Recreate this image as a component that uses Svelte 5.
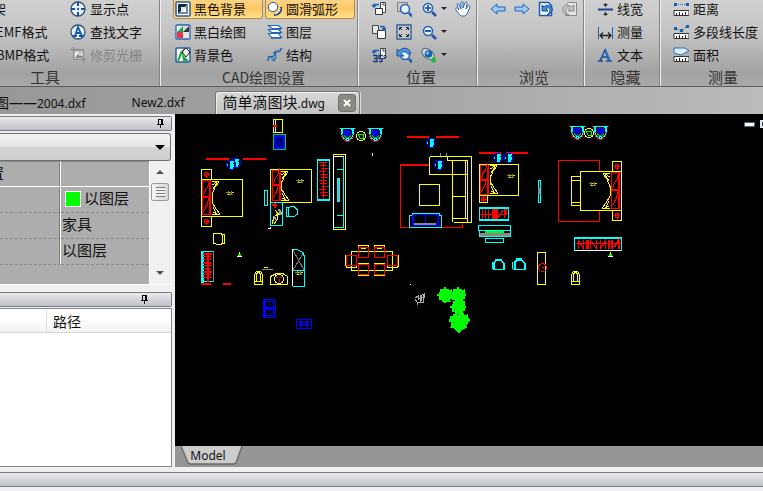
<script lang="ts">
  type Tool = { icon: string; label?: string; active?: boolean; disabled?: boolean; menu?: boolean; title?: string };
  type Group = { name: string; cls: string; tools: Tool[] };

  let blackBg = $state(true);
  let smoothArc = $state(true);
  let activeTab = $state(2);

  const groups: Group[] = $derived([
    {
      name: '工具', cls: 'tools', tools: [
        { icon: '', label: '架' }, { icon: 'target', label: '显示点' },
        { icon: '', label: 'EMF格式' }, { icon: 'find', label: '查找文字' },
        { icon: '', label: 'BMP格式' }, { icon: 'crop', label: '修剪光栅', disabled: true },
      ],
    },
    {
      name: 'CAD绘图设置', cls: 'settings', tools: [
        { icon: 'black', label: '黑色背景', active: blackBg }, { icon: 'arc', label: '圆滑弧形', active: smoothArc },
        { icon: 'mono', label: '黑白绘图' }, { icon: 'layers', label: '图层' },
        { icon: 'bg', label: '背景色' }, { icon: 'struct', label: '结构' },
      ],
    },
    {
      name: '位置', cls: 'position', tools: [
        { icon: 'rotl', title: '左转' }, { icon: 'zoomwin', title: '窗口缩放' }, { icon: 'zoomin', menu: true, title: '放大' }, { icon: 'hand', title: '平移' },
        { icon: 'rotr', title: '右转' }, { icon: 'fit', title: '适应窗口' }, { icon: 'zoomout', menu: true, title: '缩小' }, { icon: '', title: '' },
        { icon: 'rot35', title: '旋转角度' }, { icon: 'zoomprev', title: '上一视图' }, { icon: 'orbit', menu: true, title: '轨道' }, { icon: '', title: '' },
      ],
    },
    {
      name: '浏览', cls: 'browse', tools: [
        { icon: 'prev', title: '后退' }, { icon: 'next', title: '前进' }, { icon: 'undo', title: '撤销' }, { icon: 'redo', title: '重做', disabled: true },
      ],
    },
    {
      name: '隐藏', cls: 'hide', tools: [
        { icon: 'lw', label: '线宽' }, { icon: 'dim', label: '测量' }, { icon: 'text', label: '文本' },
      ],
    },
    {
      name: '测量', cls: 'measure', tools: [
        { icon: 'dist', label: '距离' }, { icon: 'poly', label: '多段线长度' }, { icon: 'area', label: '面积' },
      ],
    },
  ]);

  const rungs = (n: number) => Array.from({ length: n }, (_, i) => i);

  // ragged outline of a tree crown
  function crown(cx: number, cy: number, r: number) {
    const n = r * 4;
    return rungs(n).map((i) => {
      const a = (i / n) * Math.PI * 2;
      const d = r + [1, -1, 0, -2, 1, 0, -1][i % 7];
      return `${Math.round(cx + Math.cos(a) * d)},${Math.round(cy + Math.sin(a) * d)}`;
    }).join(' ');
  }

  function press(tool: Tool) {
    if (tool.icon === 'black') blackBg = !blackBg;
    if (tool.icon === 'arc') smoothArc = !smoothArc;
  }
</script>

{#snippet ruler()}
  <path d="M1 9.5h15v5H1z" fill="#fff" stroke="#333" />
  <path d="M3.5 12v2M6.5 11v3M9.5 12v2M12.5 11v3" stroke="#222" />
{/snippet}

{#snippet lens(x: number, y: number)}
  <circle cx={x} cy={y} r="4.5" fill="#e4f1ff" stroke="#2860b8" stroke-width="1.5" />
  <path d="M{x + 4} {y + 4}l4 4" stroke="#2458a8" stroke-width="2.6" />
{/snippet}

{#snippet icon(name: string)}
  <svg class="icon" width="16" height="16" viewBox="0 0 16 16" fill="none" aria-hidden="true">
    {#if name === 'target'}
      <circle cx="8" cy="8" r="7" fill="#eaf5ff" stroke="#35506f" stroke-width="1.3" />
      <path d="M8 1v4M8 11v4M1 8h4M11 8h4" stroke="#174f9b" stroke-width="2" />
      <circle cx="8" cy="8" r="1.2" fill="#1467c8" />
    {:else if name === 'find'}
      <circle cx="8" cy="8" r="7" fill="#eaf5ff" stroke="#35506f" stroke-width="1.3" />
      <path d="M3 12h4M9 12h5M5 12l3-9 4 9M6 9h4" stroke="#0d58b5" stroke-width="1.8" />
    {:else if name === 'crop'}
      <path d="M3.5 0v12.5H16M0 2.5h13.5V16" stroke="#858585" />
      <path d="M4 4h9v8H4z" fill="#e8e8e8" stroke="#999" />
      <path d="M5 11l3-4 2 2 1-1 2 3z" fill="#888" /><circle cx="10" cy="6" r="1" fill="#999" />
    {:else if name === 'black'}
      <rect x="1" y="1" width="14" height="14" rx="1" fill="#fff" stroke="#1d5fac" stroke-width="1.5" />
      <path d="M3 3h10L3 13z" fill="#142942" /><path d="M13 3v10H3z" fill="#7189a4" />
      <path d="M6 6h5l-5 5z" fill="#dfe8f2" /><path d="M11 6v5H6z" fill="#fff" />
    {:else if name === 'mono'}
      <rect x="1" y="1" width="14" height="14" rx="1" fill="#fff" stroke="#2866a8" stroke-width="1.3" />
      <path d="M8 2h6L8 8z" fill="#ddd" /><path d="M14 2v6H8z" fill="#333" /><path d="M2 2h6v6H2z" fill="#e9f7ec" /><path d="M2 8l6-6v6z" fill="#1ba64a" />
      <path d="M2 8h6v6H2z" fill="#e6374b" /><path d="M8 8h6v6H8z" fill="#e4e4e4" />
    {:else if name === 'arc'}
      <circle cx="6" cy="6" r="4.700" fill="#fff" stroke="#275b9d" />
      <path d="M14 6c1 4-2 8-7 8" stroke="#19447f" stroke-width="2" />
      <path d="M13 7c0 4-2 5-5 6" stroke="#fff" />
    {:else if name === 'layers'}
      <path d="M1.500 1.500h10l3 3H5zM1.500 5.500l3 3h10l-3-3zM1.500 9.500l3 4h10l-3-4z" fill="#fff" stroke="#2468ae" stroke-width="1.200" />
      <path d="M5 5h9M5 9h9M4 14h10" stroke="#2468ae" stroke-width="1.500" />
    {:else if name === 'bg'}
      <rect x="1" y="1" width="14" height="14" rx="1" fill="#fff" stroke="#2662a5" stroke-width="1.500" />
      <path d="M2 14L6 3l3 6 5 5z" fill="#21a83a" /><path d="M7 5l4-4 4 4-4 5z" fill="#f2f2f2" stroke="#222" />
      <path d="M10 2c-2 0-3 2-2 4" stroke="#333" /><path d="M4 14l3-7 1 7" fill="#fff" />
    {:else if name === 'struct'}
      <path d="M1 14c0-8 6-1 6-7s7 1 7-6M1 10c5-3 4 8 7 2s-3-6 2-7 3-4 5-3" stroke="#2364ad" stroke-width="1.500" />
      <path d="M3 10l3 4M6 7l4 4M9 4l3 3M11 2l3 3" stroke="#68a1dd" />
    {:else if name === 'rotl' || name === 'rotr' || name === 'rot35'}
      {#if name === 'rotr'}
        <path d="M1.500 1.500h6v8h-6z" fill="#e9e9e9" stroke="#444" /><path d="M6.500 6.500h8v8h-8z" fill="#fff" stroke="#333" />
        <path d="M9 2.500h4v3M11 4l2 2 2-2" stroke="#1563ba" stroke-width="1.400" />
      {:else}
        <path d="M9.500 1.500h5v10h-5z" fill="#fff" stroke="#444" /><path d="M12 1v3h3" stroke="#444" />
        <path d="M8 3.500H3v3M1 4l2 2 2-2" stroke="#1563ba" stroke-width="1.400" />
        {#if name === 'rotl'}
          <path d="M4.500 7.500h7v6h-7z" fill="#fff" stroke="#333" />
        {:else}
          <path d="M2 8.500h4v6H2M3 11.500h3M12 8.500H8v3h3v3H8" stroke="#193c78" stroke-width="1.300" /><circle cx="14" cy="9.500" r="1.200" stroke="#193c78" />
        {/if}
      {/if}
    {:else if name === 'zoomwin'}
      <path d="M1.500 1.500h10v9h-10z" stroke="#333" stroke-dasharray="1 1" />{@render lens(9, 8)}
    {:else if name === 'zoomin'}
      {@render lens(7, 7)}<path d="M4 7h6M7 4v6" stroke="#164fa4" stroke-width="1.700" />
    {:else if name === 'zoomout'}
      {@render lens(7, 7)}<path d="M4 7h6" stroke="#164fa4" stroke-width="1.800" />
    {:else if name === 'fit'}
      <path d="M1 1h14v14H1z" fill="#c8c8c8" stroke="#2c62a0" stroke-width="1.400" />
      <path d="M3.500 6V3.500H6M10 3.500h2.500V6M3.500 10v2.500H6M10 12.500h2.500V10M4 4l2 2M12 4l-2 2M4 12l2-2M12 12l-2-2" stroke="#222" />
    {:else if name === 'zoomprev'}
      {@render lens(9, 8)}<path d="M1 2v7h7L5 7c1-3 5-3 7 0l3-1c-2-6-9-6-12-2z" fill="#4a94dc" stroke="#1d559f" />
    {:else if name === 'orbit'}
      <ellipse cx="7" cy="7" rx="7" ry="4.500" transform="rotate(40 7 7)" fill="#ccd7e4" stroke="#566" />
      <circle cx="7.500" cy="7" r="3.800" fill="#1764ad" /><circle cx="6.500" cy="6" r="1.500" fill="#83c2f4" /><circle cx="12.500" cy="13" r="2.500" fill="#20b936" />
    {:else if name === 'hand'}
      <path d="M5 14L1 9c-1-2 1-3 2-1l1 1-2-5c0-2 2-2 2 0l2 4V2c0-2 2-2 2 0v5l2-5c1-2 2-1 2 1l-1 5 2-3c1-1 2 0 2 1l-3 7-2 2H6z" fill="#fff" stroke="#2e66b0" />
    {:else if name === 'prev'}
      <path d="M1 8l6-5v3h8v4H7v3z" fill="#9bccf5" stroke="#2661b0" />
    {:else if name === 'next'}
      <path d="M15 8L9 3v3H1v4h8v3z" fill="#9bccf5" stroke="#2661b0" />
    {:else if name === 'undo'}
      <path d="M1.500 1.500h9l3 3v10h-12z" fill="#fff" stroke="#1a5db3" stroke-width="1.500" />
      <path d="M4 4v6h6L8 8c2-2 4-1 4 1 0 3-2 4-3 5 4-1 6-4 5-7s-6-4-8-1z" fill="#378dde" stroke="#164d9a" />
    {:else if name === 'redo'}
      <path d="M14.500 1.500h-8l-3 3v10h11z" fill="#e7e7e7" stroke="#888" />
      <path d="M12 4v6H6l2-2C6 6 4 7 4 9c0 3 1 4 3 5-5 0-7-4-6-7s6-4 8-1z" fill="#c3c3c3" stroke="#888" />
    {:else if name === 'lw'}
      <path d="M1 8.500h15" stroke="#164994" stroke-width="2" /><path d="M6 3h5L8.500 6zM6 14h5l-2.500-3z" fill="#333" /><path d="M8.500 2v4M8.500 11v4" stroke="#333" />
    {:else if name === 'dim'}
      <path d="M1.500 3v12M15.500 3v12" stroke="#1f64b7" /><path d="M3 11.500h11M6 8.500l-3 3 3 3M11 8.500l3 3-3 3" stroke="#222" stroke-width="1.300" />
    {:else if name === 'text'}
      <path d="M1 14h5M9 14h6M3 14L8 3l4 11M5 10h5" stroke="#174f9c" stroke-width="1.500" /><path d="M8 3l4 11h2L9 2z" fill="#2c70bd" />
    {:else if name === 'dist'}
      <path d="M3 3.500h12" stroke="#1c5fb0" stroke-dasharray="1 1" /><path d="M1 2h3v3H1zM13 2h3v3h-3z" fill="#145eb6" />{@render ruler()}
    {:else if name === 'poly'}
      <path d="M2 4l6 3 6-5" stroke="#1c5fb0" stroke-dasharray="1 1" /><path d="M1 3h3v3H1zM7 5h3v3H7zM13 1h3v3h-3z" fill="#145eb6" />{@render ruler()}
    {:else if name === 'area'}
      <path d="M1 1h11l4 3-8 4-7-2z" fill="#d9efff" stroke="#2e6eae" />{@render ruler()}
    {/if}
  </svg>
{/snippet}

{#snippet pin()}
  <svg width="9" height="9" viewBox="0 0 9 9" fill="none" stroke="#000" shape-rendering="crispEdges" aria-hidden="true">
    <path d="M2.500 5V.500h4V5M5.500 1v4M1 5.500h7M4.500 6v3" />
  </svg>
{/snippet}

{#snippet armchair(x: number, y: number)}
  <g transform="translate({x} {y})">
    <path d="M1 .5h15M2.500 1v5l2 4 3 2h2l3-2 2-4V1" stroke="#0ff" />
    <path d="M2 1.500h2M12 1.500h3M3.500 2v4M13.500 2v4M7 10.500h3" stroke="#0ff" />
    <path d="M5 2h7v5l-2 2H7L5 7z" fill="#00f" />
    <path d="M6 3h1M9 4h1M7 6h1M11 3h1M10 7h1" stroke="#000" /><path d="M5 7.500l2 2h3l2-2" stroke="#0a0" />
    <path d="M2.500 8.500l2 3 3 2h2l3-2 2-3M.5 0v1M16.500 0v1" stroke="#f00" />
  </g>
{/snippet}

{#snippet roundTable(x: number, y: number)}
  <circle cx={x} cy={y} r="4.500" stroke="#ff0" />
  <path d="M{x - 3} {y - 2}l3 1 2-1 1 2-1 3-3-1z" stroke="#0f0" />
{/snippet}

{#snippet plant(x: number, y: number)}
  <g transform="translate({x} {y})">
    <path d="M-1-5l5 2 1 4-4 4-4-2-2-2v-3z" stroke="#00f" />
    <path d="M0-4l3 1-2 2 2 1-1 2-1 2-2-1 1-2-1-2zM-4 1l1-2" fill="#0ff" stroke="#0ff" />
  </g>
{/snippet}

{#snippet pillows(x: number, y: number, h: number)}
  <g stroke="#f00">
    <rect {x} {y} width="8" height={h / 2 - 1} /><rect {x} y={y + h / 2} width="8" height={h / 2} />
    <path d="M{x + 1} {y + h / 2 - 2}l2-6 2-2 2-7M{x + 1} {y + h - 2}l2-5 2-4 1-5M{x + 7} {y + 2}v{h - 3}" />
  </g>
{/snippet}

{#snippet quilt(h: number)}
  <path d="M0 0l7 1-4 5-3 8M0 4l5-3M1 8l4-6M0 {h / 2 - 5}v10M0 {h}l8-1-4-5-4-7M1 {h - 3}l4 2M1 {h - 8}l3 6" stroke="#ff0" />
{/snippet}

{#snippet caption(x: number, y: number)}
  <path d="M{x} {y}h8M{x + 1} {y + 2}h6M{x + 2} {y - 1}v4M{x + 5} {y - 1}v4" stroke="#880" />
  <path d="M{x + 3} {y}h1M{x + 6} {y}h2M{x + 2} {y + 2}h2" stroke="#dd3" />
{/snippet}

{#snippet nightstand(x: number, y: number, w: number, h: number)}
  <rect {x} {y} width={w} height={h} stroke="#ff0" />
  <circle cx={x + w / 2} cy={y + h / 2} r="2" stroke="#f00" />
  <path d="M{x + w / 2 - 3} {y + h / 2}h6M{x + w / 2} {y + h / 2 - 3}v6" stroke="#f00" />
{/snippet}

{#snippet sprout(x: number, y: number)}
  <path d="M{x} {y - 3}v2" stroke="#ff0" /><path d="M{x - 1} {y}h3" stroke="#0f0" stroke-width="2" /><path d="M{x - 2} {y + 1.5}h5" stroke="#fff" />
{/snippet}

{#snippet diningChair(x: number, y: number, back: number)}
  <path d="M{x} {y + back}h10v12h-10z" stroke="#ff0" /><path d="M{x} {y}h10v10h-10z" stroke="#f00" />
{/snippet}

{#snippet toilet(x: number, y: number)}
  <path d="M{x} {y + 14}v-9l2-4h4l2 4v9zM{x + 2} {y + 11}v-6l1-3h2l1 3v6M{x} {y + 11.5}h8" stroke="#ff0" />
{/snippet}

<div class="app">
  <header class="ribbon">
    {#each groups as group}
      <section class="group {group.cls}" aria-label={group.name}>
        <div class="items">
          {#each group.tools as tool}
            {#if tool.icon || tool.label}
              <button
                type="button"
                class="tool"
                class:active={tool.active}
                disabled={tool.disabled}
                aria-label={tool.label ?? tool.title}
                onclick={() => press(tool)}
              >
                {#if tool.icon}{@render icon(tool.icon)}{/if}
                {#if tool.label}<span>{tool.label}</span>{/if}
                {#if tool.menu}<i class="caret"></i>{/if}
              </button>
            {:else}
              <span></span>
            {/if}
          {/each}
        </div>
        <h2>{group.name}</h2>
      </section>
    {/each}
  </header>

  <nav class="tabs">
    <button type="button" class="tab first" class:current={activeTab === 0} onclick={() => activeTab = 0}><b>图——</b>2004.dxf</button>
    <button type="button" class="tab" class:current={activeTab === 1} onclick={() => activeTab = 1}>New2.dxf</button>
    <div class="tab-wrap" class:current={activeTab === 2}>
      <button type="button" class="tab" onclick={() => activeTab = 2}><b>简单滴图块</b>.dwg</button>
      <button type="button" class="close" aria-label="关闭">
        <svg width="8" height="8" viewBox="0 0 8 8" stroke="#fff" stroke-width="2" aria-hidden="true"><path d="M1 1l6 6M7 1L1 7" /></svg>
      </button>
    </div>
  </nav>

  <main>
    <aside>
      <div class="panel-title"><button type="button" aria-label="固定属性面板">{@render pin()}</button></div>
      <div class="combo">
        <select aria-label="对象类型"><option></option></select>
        <i class="caret big"></i>
      </div>
      <div class="props">
        <table>
          <thead><tr><th>置</th><th></th></tr></thead>
          <tbody>
            <tr><td></td><td><i class="swatch"></i>以图层</td></tr>
            <tr><td></td><td>家具</td></tr>
            <tr><td></td><td>以图层</td></tr>
          </tbody>
        </table>
        <div class="scroll">
          <button type="button" aria-label="向上滚动"><i class="arrow up"></i></button>
          <div class="thumb"></div>
          <button type="button" aria-label="向下滚动"><i class="arrow"></i></button>
        </div>
      </div>
      <div class="panel-title second"><button type="button" aria-label="固定文件面板">{@render pin()}</button></div>
      <div class="files">
        <table><thead><tr><th></th><th>路径</th></tr></thead></table>
      </div>
    </aside>

    <section class="view">
      <div class="canvas">
        <svg class="drawing" width="588" height="332" viewBox="175 114 588 332" fill="none" shape-rendering="crispEdges" role="img" aria-label="简单滴图块.dwg">
          <!-- washer and sink -->
          <path d="M273.500 119.500h9v13h-9zM275.500 120v12" stroke="#ff0" /><path d="M273 125.500h4" stroke="#f00" stroke-width="2" />
          <rect x="273.500" y="134.500" width="12" height="15" stroke="#0c4" /><path d="M275 136h9v12h-9z" fill="#00a" stroke="#00f" stroke-width="2" /><path d="M277.500 139.500h4v5h-4z" stroke="#003" />

          {@render armchair(339, 128)}{@render roundTable(361, 136)}{@render armchair(367, 128)}
          {@render armchair(569, 126)}{@render roundTable(589, 133)}{@render armchair(592, 126)}
          <path d="M372.500 153v3M410 284.500h1M271 228.500h-3M270.500 227v1" stroke="#fff" />

          <!-- left bedroom -->
          <path d="M206 159h23M243 159h23M407 137h22M436 137h23M479 153h22M506 153h22" stroke="#f00" stroke-width="2" />
          {@render plant(236, 163)}{@render plant(231, 165)}
          {@render nightstand(201.5, 169.5, 10, 10)}
          {@render nightstand(201.5, 216.5, 10, 10)}
          <rect x="201.500" y="179.500" width="41" height="37" stroke="#ff0" />
          {@render pillows(202.5, 180.5, 34)}
          <g transform="translate(212 181)">{@render quilt(34)}</g>
          {@render caption(226, 192)}

          <!-- second bedroom -->
          <rect x="270.500" y="169.500" width="41" height="33" stroke="#ff0" />
          {@render pillows(272.5, 170.5, 30)}
          <g transform="translate(281 171)">{@render quilt(30)}</g>
          {@render caption(296, 180)}
          <path d="M264.500 190.500h3v15h-3zM270.500 202.500h12v23h-12zM286 207.500l8-1 3 3v5l-3 2h-8zM288.500 207v9" stroke="#0ff" />
          <path d="M272 205h5M274.500 203v5" stroke="#f00" stroke-width="2" />
          <path d="M275 210l4 5 3-3M272 224l2-7 4-3-1 6-3 4M278 209l3 6" stroke="#ff0" /><path d="M279 209l2 6M274 216l2 4" stroke="#999" stroke-width="2" />

          <!-- wardrobes and cabinet -->
          <rect x="317.500" y="159.500" width="12" height="41" stroke="#0ff" />
          <path d="M318 160.500h11M318 199.500h11" stroke="#0ff" />
          <path d="M323.500 162v37" stroke="#f00" />
          {#each rungs(12) as i}<path d="M{319 + (i % 3)} {162.5 + i * 3}h{8 - (i % 2)}" stroke="#f00" />{/each}
          <rect x="333.500" y="154.500" width="12" height="75" stroke="#ff0" />
          <path d="M334 227.500h9.500V156M337 169.500h6M337 215.500h6M337.500 178.500h2v23h-2z" stroke="#0ff" /><path d="M338.500 179v22" stroke="#999" /><path d="M333.500 229V156.500h10" stroke="#fff" />
          <path d="M202.500 251v32" stroke="#0ff" stroke-width="3" /><path d="M213.500 251v31" stroke="#888" /><path d="M202 251.500h11M201 281.500h12" stroke="#0ff" />
          <path d="M207.500 252v30M201 284h10M223 284h8" stroke="#f00" stroke-width="2" />
          {#each rungs(9) as i}<path d="M203 {253.5 + i * 3}h{9 - (i % 2)}" stroke="#f00" stroke-width={i % 3 ? 1 : 2} />{/each}

          <!-- bathroom -->
          <path d="M213 233.500h6l5 1v9l-5 1-6-1zM222.500 234v10M213 233v10" stroke="#ff0" />
          {@render sprout(239, 255)}{@render sprout(610, 255)}
          {@render toilet(254.5, 270)}{@render toilet(571.5, 270)}
          <path d="M264 267.500h4" stroke="#ff0" /><path d="M262 269.500h11" stroke="#888" />
          <path d="M270.500 284.500v-8l4-2 3-1.500h4l3 1.500 3 2v8z" stroke="#ff0" /><circle cx="279" cy="279" r="4.500" stroke="#ff0" /><path d="M276 277h2M280 277h2M279 279v3" stroke="#f00" />
          <path d="M293 250l11 20M304 252l-11 18" stroke="#777" /><path d="M292.500 249.500h5l5 3 2 4v30h-12M292.500 270.500h12" stroke="#0ff" /><path d="M292.500 249v37" stroke="#fff" />
          {@render caption(295, 272)}
          <path d="M263.500 299.500h12v18h-12zM265.500 301.500h8v6h-8zM265.500 309.500h8v6h-8zM264 308.500h11M264.500 300v17M269 303v3M269 311v2M296.500 319.500h15v9h-15z" stroke="#00f" />
          <path d="M298 324h12" stroke="#00f" /><path d="M301 321v6M307 321v6M299 322h4M305 322h4M300 326h2M306 326h2" stroke="#00f" stroke-width="2" />

          <!-- dining table -->
          <rect x="351.500" y="251.500" width="41" height="19" stroke="#ff0" />
          {@render diningChair(358.5, 247.5, -2)}{@render diningChair(374.5, 247.5, -2)}
          {@render diningChair(358.5, 264.5, -1)}{@render diningChair(374.5, 264.5, -1)}
          {@render diningChair(346.5, 255.5, 0)}{@render diningChair(387.5, 255.5, 0)}
          <path d="M345.500 255v11M398.500 255v12M361 248.500h5M377 248.500h5" stroke="#ff0" />

          <!-- living room -->
          <path d="M430 165H400.500v62.500h62V222" stroke="#f00" /><path d="M400 165h30" stroke="#f00" stroke-width="2" />
          <path d="M429.500 156.500h42v66h-18M429.500 156.500v18h38M447.500 157v3.500h20V222M452.500 160v62M465.500 160v58M452 196.500h13M452 218.500h15M419.500 184.500h20v21h-20z" stroke="#ff0" />
          {@render plant(431, 143)}{@render plant(439, 165)}
          <path d="M440.500 153v3M446.500 153v3" stroke="#888" />
          <path d="M409.500 215.500h3v-2h27v2h2v12h-32z" stroke="#0ff" /><path d="M413 215v10h25v-10" stroke="#00f" stroke-width="2" /><path d="M413 214.500h26M425.500 214v11" stroke="#00f" /><path d="M414 223.500h22" stroke="#888" stroke-width="2" />

          <!-- middle bedroom -->
          {@render plant(498, 158)}{@render plant(509, 158)}
          <rect x="479.500" y="164.500" width="39" height="31" stroke="#ff0" />
          {@render pillows(480.5, 165.5, 29)}
          <g transform="translate(490 165)">{@render quilt(29)}</g>
          {@render caption(507, 175)}
          {@render nightstand(479.5, 195.5, 8, 7)}
          <rect x="479.500" y="207.500" width="29" height="13" stroke="#0ff" /><path d="M480 208.500h28M480 219.500h28" stroke="#0ff" />
          <path d="M482.500 209v10M485.500 209v10M488.500 209v10M480 214.500h27M498 218l5-8M504 210v8" stroke="#f00" /><path d="M492 209h6v10h-6zM504 209h3v6h-3z" fill="#f00" />
          <path d="M478.500 225.500h32v5h-32zM479.500 230.500h31v6h-31zM485.500 238.500h18v4h-18z" stroke="#0ff" />
          <path d="M485 232h19" stroke="#0f0" stroke-width="2" /><path d="M480 234.500h30" stroke="#888" stroke-width="3" />
          <path d="M493.500 269v-6l3-3h4l3 3v6M514.500 269v-6l2-3h5l3 3v6" stroke="#0ff" stroke-width="2" />
          <path d="M495 259.500h7M516 258.500h6M492.500 269.500h12v-7M512.500 269.500h13v-7M492.500 269v-7M512.500 269v-7" stroke="#0ff" />
          <path d="M538.500 180.500h2v22h-2z" stroke="#0ff" /><path d="M538.500 188v6" stroke="#888" stroke-width="2" />
          <rect x="537.500" y="252.500" width="8" height="32" stroke="#ff0" /><circle cx="542.500" cy="267.500" r="4" stroke="#f00" /><path d="M542 267.500h2" stroke="#f00" />

          <!-- right bedroom -->
          <path d="M599.500 171v-10.500h-41v61h41V211" stroke="#f00" />
          <path d="M571.500 176.500h9v29h-9zM572 180.500h8M572 202.500h8M580.500 171.500h41v39h-41z" stroke="#ff0" />
          {@render nightstand(612.5, 161.5, 9, 10)}{@render nightstand(612.5, 210.5, 9, 10)}
          {@render pillows(611.5, 172.5, 36)}
          <g transform="translate(610 173) scale(-1 1)">{@render quilt(36)}</g>
          {@render caption(589, 183)}
          <rect x="574.500" y="237.500" width="47" height="13" stroke="#0ff" /><path d="M575 238.500h46" stroke="#0ff" /><path d="M575 250.500h46" stroke="#fff" />
          <path d="M578.500 249v-9l5 9v-9M586.500 249v-9M590.500 249v-9l6 9v-9M600.500 240v9l5-9v9" stroke="#f00" />
          <path d="M588 240v9M609 249v-9M612 240v9M614 247l5-7v9" stroke="#f00" stroke-width="2" /><path d="M575 243.500h46" stroke="#f00" />

          <!-- trees -->
          <g fill="#0f0" stroke="#0f0">
            <polygon points={crown(445, 295, 7)} /><polygon points={crown(458, 295, 7)} />
            <polygon points={crown(458, 307, 7)} /><polygon points={crown(459, 321, 9)} />
            <path d="M455 328l4 5 3-4z" />
          </g>
          <path d="M451 294h1M460 292h1M454 309h1M453 322h1M461 318h1M465 322h1M457 314h2M447 298h1" stroke="#040" />
          <path d="M415 298l3-2v4l3-3v4M415 299l2 3h3v-6l4-2v3h-3M423 295v7h-4M417 302v3" stroke="#aaa" />
        </svg>
        <div class="winbtns">
          <button type="button" aria-label="最小化"></button>
          <button type="button" class="restore" aria-label="还原"></button>
        </div>
      </div>
      <div class="sheets">
        <button type="button" class="sheet">
          <svg width="62" height="19" viewBox="0 0 62 19" aria-hidden="true"><path d="M0 0l7 17 2 1h44l2-1 6-17" fill="#cdcdcd" stroke="#6c6c6c" stroke-width="1.500" /></svg>
          <span>Model</span>
        </button>
      </div>
    </section>
  </main>

  <footer></footer>
</div>

<style>
  :global(body) {
    margin: 0;
    background: #f0f0f0;
  }

  .app {
    display: flex;
    flex-direction: column;
    height: 100vh;
    overflow: hidden;
    color: #111;
    font-family: "Noto Sans", "Noto Sans CJK SC", sans-serif;
    font-size: 13px;
  }

  button {
    border: 0;
    padding: 0;
    background: none;
    color: inherit;
    font: inherit;
  }

  .ribbon {
    display: flex;
    flex: none;
    margin-top: -3px;
    border-bottom: 1px solid #5e5e5e;
    background: linear-gradient(#d2d2d2, #c4c4c4 40%, #a3a3a3 85%, #a9a9a9);
    font-family: "Noto Sans CJK SC", sans-serif;
  }

  .group {
    box-sizing: border-box;
    flex: none;
    border-right: 1px solid #eee;
    box-shadow: inset -1px 0 #858585;
  }

  .tools { width: 161px; }
  .settings { width: 198px; }
  .position { width: 119px; }
  .browse { width: 107px; }
  .hide { width: 76px; }
  .measure {
    flex: 1 0 102px;
    border: 0;
    box-shadow: none;
  }

  .items {
    display: grid;
    grid-auto-rows: 23px;
    height: 69px;
    align-items: center;
    justify-content: start;
  }

  .tools .items { grid-template-columns: 70px auto; }
  .tools .tool:nth-child(odd) { margin-left: -4px; }
  .tools .tool:first-child { margin-left: -7px; }
  .settings .items { grid-template-columns: 90px 90px; gap: 0 2px; padding-left: 12px; }
  .position .items { grid-template-columns: 25px 25px 34px 20px; padding-left: 12px; }
  .browse .items { grid-template-columns: repeat(4, 24px); padding-left: 12px; }
  .hide .items { padding-left: 12px; }
  .measure .items { padding-left: 12px; }

  .tool {
    display: flex;
    box-sizing: border-box;
    align-items: center;
    gap: 4px;
    height: 21px;
    line-height: 19px;
    white-space: nowrap;
  }

  .tool:disabled {
    color: #858585;
  }

  .settings .tool {
    gap: 3px;
    padding: 0 1px;
    border: 1px solid transparent;
    border-radius: 3px;
  }

  .settings .tool.active {
    border-color: #b88a3a;
    background: linear-gradient(#fbd58c, #fdc963 50%, #fee08c);
  }

  .icon {
    flex: none;
  }

  .caret {
    border: 3px solid transparent;
    border-top-color: #222;
    border-bottom: 0;
  }

  .caret.big {
    border-width: 5px;
    border-top-color: #000;
    border-bottom: 0;
  }

  h2 {
    margin: 2px 0 0;
    color: #333;
    font-size: 15px;
    font-weight: 400;
    line-height: 18px;
    text-align: center;
  }

  .tools h2 { padding-right: 70px; }
  .settings h2 { padding-left: 8px; font-size: 14px; }
  .position h2 { padding-left: 6px; }
  .browse h2 { padding-left: 6px; }
  .hide h2 { padding-left: 6px; }
  .measure h2 { padding-left: 22px; }

  .tabs {
    display: flex;
    flex: none;
    align-items: flex-end;
    height: 27px;
    background: linear-gradient(90deg, #989898, #a0a0a0 40%, #bbb);
  }

  .tab {
    height: 22px;
    line-height: 20px;
    font-size: 12px;
    white-space: nowrap;
  }

  .tab b {
    font-size: 14px;
    font-weight: 400;
  }

  .tab.first {
    margin: 0 46px 0 -5px;
  }

  .tab-wrap {
    display: flex;
    box-sizing: border-box;
    gap: 13px;
    align-items: center;
    height: 23px;
    margin-left: 30px;
    padding: 0 3px 0 7px;
    border: 1px solid #777;
    border-bottom: 0;
    border-radius: 3px 3px 0 0;
  }

  .tab-wrap b {
    font-size: 15px;
  }

  .tab-wrap.current {
    background: linear-gradient(#d8d8d8, #c2c2c2);
    box-shadow: inset 1px 1px #eee, 1px 0 #ddd;
  }

  .close {
    display: grid;
    box-sizing: border-box;
    place-items: center;
    width: 18px;
    height: 18px;
    border: 1px solid #707070;
    border-radius: 3px;
    background: #8a8a82;
  }

  main {
    display: flex;
    flex: 1;
    min-height: 0;
  }

  aside {
    display: flex;
    box-sizing: border-box;
    flex: none;
    flex-direction: column;
    width: 175px;
    padding: 2px 3px 0 0;
    font-family: "Noto Sans CJK SC", sans-serif;
  }

  .panel-title {
    display: flex;
    box-sizing: border-box;
    align-items: center;
    justify-content: flex-end;
    flex: none;
    height: 15px;
    padding-right: 6px;
    border: 1px solid #747880;
    border-left: 0;
    border-radius: 0 2px 2px 0;
    background: linear-gradient(#e9e9ec, #bfc2ca);
  }

  .panel-title button {
    display: flex;
  }

  .panel-title.second {
    margin-top: 7px;
    padding-right: 22px;
  }

  .combo {
    display: grid;
    box-sizing: border-box;
    align-items: center;
    flex: none;
    height: 28px;
    margin: 2px 1px 0 0;
    border: 1px solid #707070;
    border-left: 0;
    border-radius: 0 3px 3px 0;
    background: linear-gradient(#f2f2f2, #e6e6e6 50%, #d3d3d3 52%, #cfcfcf);
  }

  .combo select,
  .combo .caret {
    grid-area: 1 / 1;
  }

  .combo select {
    width: 100%;
    height: 26px;
    border: 0;
    background: none;
    appearance: none;
  }

  .combo .caret {
    justify-self: end;
    margin-right: 5px;
    pointer-events: none;
  }

  .props {
    display: flex;
    flex: none;
    height: 123px;
    border-bottom: 1px solid #fff;
    background: #adadad;
    font-size: 15px;
  }

  table {
    width: 100%;
    border-collapse: collapse;
    border-spacing: 0;
    table-layout: fixed;
  }

  .props table {
    flex: 1;
    height: 104px;
    width: auto;
    border-collapse: separate;
  }

  th,
  td {
    padding: 0;
    font-weight: 400;
    line-height: 20px;
    text-align: left;
    white-space: nowrap;
  }

  .props th {
    width: 88px;
    height: 22px;
    padding-bottom: 2px;
    border-top: 1px solid #888;
    border-bottom: 1px solid #fff;
  }

  .props td {
    height: 22px;
    padding-bottom: 3px;
    border-bottom: 1px dashed #888;
  }

  .props th:first-child {
    width: 60px;
    text-indent: -11px;
  }

  .props th:first-child,
  .props td:first-child {
    border-right: 1px solid #fff;
    box-shadow: inset -1px 0 #808080;
  }

  .props td:last-child {
    padding-left: 1px;
  }

  .swatch {
    display: inline-block;
    width: 14px;
    height: 14px;
    margin: 0 3px;
    border: 1px solid #fff;
    background: #0f0;
    vertical-align: -3px;
  }

  .scroll {
    display: flex;
    box-sizing: border-box;
    flex-direction: column;
    align-items: center;
    width: 23px;
    padding: 4px 3px 4px 1px;
    border-left: 1px solid #fff;
    background: #f0f0f0;
  }

  .scroll button {
    display: grid;
    place-items: center;
    width: 17px;
    height: 14px;
  }

  .scroll button:last-child {
    margin-top: auto;
  }

  .arrow {
    border: 4px solid transparent;
    border-top-color: #555;
    border-bottom: 0;
  }

  .arrow.up {
    rotate: 180deg;
  }

  .thumb {
    box-sizing: border-box;
    width: 18px;
    height: 18px;
    margin-top: 4px;
    border: 1px solid #999;
    border-radius: 2px;
    background:
      repeating-linear-gradient(#777 0 1px, #f4f4f4 1px 3px) center / 9px 10px no-repeat,
      linear-gradient(90deg, #f4f4f4, #d4d4d8);
  }

  .files {
    flex: 1;
    margin-top: 1px;
    border: 1px solid #828790;
    border-left: 0;
    background: #fff;
    font-size: 14px;
  }

  .files th {
    height: 23px;
    padding-left: 6px;
    border-bottom: 1px solid #d5d5d5;
    background: linear-gradient(#fff 40%, #f1f2f4);
  }

  .files th:first-child {
    width: 40px;
    border-right: 1px solid #ddd;
  }

  .view {
    display: flex;
    flex: 1;
    flex-direction: column;
    min-width: 0;
  }

  .canvas {
    position: relative;
    flex: 1;
    min-height: 0;
    overflow: hidden;
    background: #000;
  }

  .drawing {
    display: block;
  }

  .winbtns {
    position: absolute;
    top: 6px;
    right: -7px;
    display: flex;
    gap: 5px;
    align-items: center;
  }

  .winbtns button {
    box-sizing: border-box;
    width: 11px;
    height: 5px;
    border: 1px solid #53606e;
    background: #fff;
  }

  .winbtns .restore {
    width: 10px;
    height: 8px;
    border: 2px solid #dce4ec;
    background: #345;
  }

  .sheets {
    flex: none;
    height: 21px;
    padding-left: 6px;
    background: #969696;
  }

  .sheet {
    display: grid;
    place-items: center;
    font-size: 12px;
    line-height: 18px;
  }

  .sheet svg,
  .sheet span {
    grid-area: 1 / 1;
  }

  .sheet span {
    margin-right: 8px;
  }

  footer {
    box-sizing: border-box;
    flex: none;
    height: 15px;
    margin: 5px 0 4px;
    border: solid #777b82;
    border-width: 1px 0;
    background: linear-gradient(#e8e8eb, #bfc3ca);
  }
</style>
